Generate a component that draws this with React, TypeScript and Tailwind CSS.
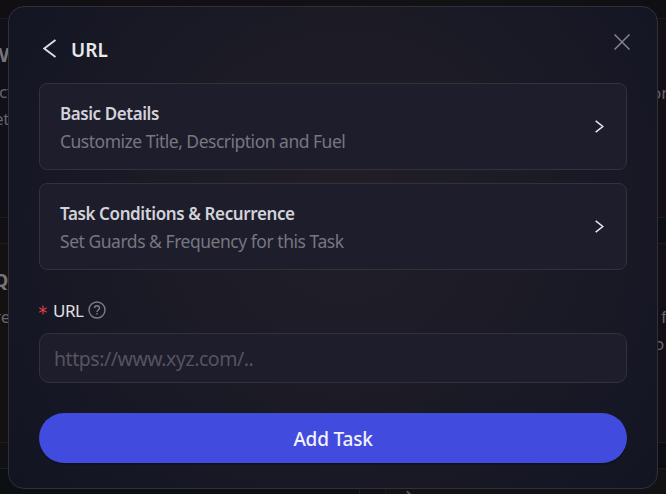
import React from "react";

type OptionProps = { title: string; text: string; titleClass: string; textClass: string };

function Option({ title, text, titleClass, textClass }: OptionProps) {
  return (
    <button className="flex h-[87px] w-full items-center justify-between rounded-lg border border-[#32313e] bg-[#1e1d2b] pr-[22px] pl-5 text-left">
      <span className="flex flex-col pt-[2px]">
        <span className={`text-[17px] leading-7 font-semibold whitespace-nowrap text-[#d2d3d9] ${titleClass}`}>{title}</span>
        <span className={`text-[17.5px] leading-[27px] whitespace-nowrap text-[#777681] ${textClass}`}>{text}</span>
      </span>
      <svg width="9" height="13" viewBox="0 0 9 13" fill="none" stroke="#e8e8ec" strokeWidth="1.5">
        <path d="M.7.9 7.8 6.5.7 12.1" />
      </svg>
    </button>
  );
}

function Backdrop() {
  return (
    <div className="grid h-full grid-cols-[360px_1fr] grid-rows-[200px_200px_200px] gap-x-[25px] gap-y-[25px] overflow-hidden bg-[linear-gradient(120deg,#110f14,#121114_50%,#0b0d13)] pt-[18px] text-[17px] leading-[27px] whitespace-nowrap text-[#66646a]">
      <div className="border-y border-[#1c1a21] bg-[#110f18] pt-[21px]">
        <p className="-ml-[10px] text-[20px] leading-[30px] font-bold text-[#77757a]">W</p>
        <p className="-ml-px mt-2 tracking-[-0.5px]">ct</p>
        <p className="-ml-[6px] tracking-[-0.3px]">et</p>
      </div>
      <div className="border-y border-[#201b1d] bg-[#130f14] pt-[60px]">
        <p className="ml-[266px]">on</p>
      </div>
      <div className="border-y border-[#211d1d] bg-[#141111] pt-[21px]">
        <p className="-ml-[6px] text-[18px] leading-[30px] font-bold text-[#77757a]">Qu</p>
        <p className="-ml-[6px] mt-2">re</p>
      </div>
      <div className="border-y border-[#201b1d] bg-[#130f14] pt-[59px]">
        <p className="ml-[276px]">f</p>
        <p className="ml-[269px]">o</p>
      </div>
      <div className="border border-l-0 border-[#142022] bg-[#0b1013]" />
      <div className="border border-r-0 border-[#1c1b1d] bg-[#121113] pt-[22px] pl-5">
        <svg width="5" height="3" viewBox="0 0 5 3"><path d="M0 0h2l3 3H2z" fill="#55545a" /></svg>
      </div>
    </div>
  );
}

export default function App() {
  return (
    <div className="relative h-[494px] w-[666px] overflow-hidden bg-[#110f14] font-['Noto_Sans','Open_Sans',sans-serif]">
      <Backdrop />
      <section className="absolute top-[6px] left-[8px] h-[483px] w-[650px] rounded-[16px] border border-[#302f3b] bg-[#131523] bg-[radial-gradient(circle_at_52%_43%,#211e25_0%,#1e1c26_28%,#181925_62%,#131422_100%)] px-[30px]">
        <header className="flex h-[76px] items-start justify-between">
          <div className="flex items-start">
            <svg className="mt-[32px] ml-[4px]" width="14" height="19" viewBox="0 0 14 19" fill="none" stroke="#dedee3" strokeWidth="1.8">
              <path d="M12.5 1 1.3 9.5l11.2 8.5" />
            </svg>
            <h1 className="mt-[29px] ml-[14px] text-[19px] leading-[28px] font-semibold tracking-[0.1px] text-[#e8e8ec]">URL</h1>
          </div>
          <svg className="mt-[27px] mr-[-3px]" width="16" height="16" viewBox="0 0 16 16" stroke="#85848d" strokeWidth="1.5">
            <path d="m.5.5 15 15m0-15-15 15" />
          </svg>
        </header>
        <div className="flex flex-col gap-[13px]">
          <Option title="Basic Details" text="Customize Title, Description and Fuel" titleClass="tracking-[-0.43px]" textClass="tracking-[-0.5px]" />
          <Option title="Task Conditions & Recurrence" text="Set Guards & Frequency for this Task" titleClass="tracking-[-0.39px]" textClass="tracking-[-0.47px]" />
        </div>
        <label className="mt-[27px] flex h-[26px] items-center text-[17px] leading-[26px] text-[#e0e0e5]">
          <svg className="mr-[6px]" width="8" height="10" viewBox="0 0 8 10" stroke="#d63f44" strokeWidth="1.2">
            <path d="M4 .5v9M.3 2.8l7.4 4.4M7.7 2.8.3 7.2" />
          </svg>
          <span className="pt-px tracking-[-0.5px]">URL</span>
          <svg className="ml-[5px]" width="18" height="18" viewBox="0 0 18 18" fill="none" stroke="#7d7c86" strokeWidth="1.4">
            <circle cx="9" cy="9" r="8" />
            <path d="M6.5 7.1c0-3.2 5-3.2 5 0 0 1.9-2.5 1.8-2.5 3.9M9 12.1v1.4" />
          </svg>
        </label>
        <input
          className="mt-[10px] block h-[50px] w-full rounded-[10px] border border-[#32313c] bg-[#1e1d2b] px-[14px] text-[19.5px] tracking-[-0.46px] outline-none placeholder:text-[#55545f]"
          placeholder="https://www.xyz.com/.."
        />
        <button className="mt-[30px] block h-[50px] w-full rounded-full bg-[#414bdd] text-[19px] leading-[52px] font-medium text-[#f2f2fc] shadow-[0_2px_0_rgba(15,12,30,0.45)]">
          <span className="tracking-[-0.2px]">Add Task</span>
        </button>
      </section>
    </div>
  );
}
